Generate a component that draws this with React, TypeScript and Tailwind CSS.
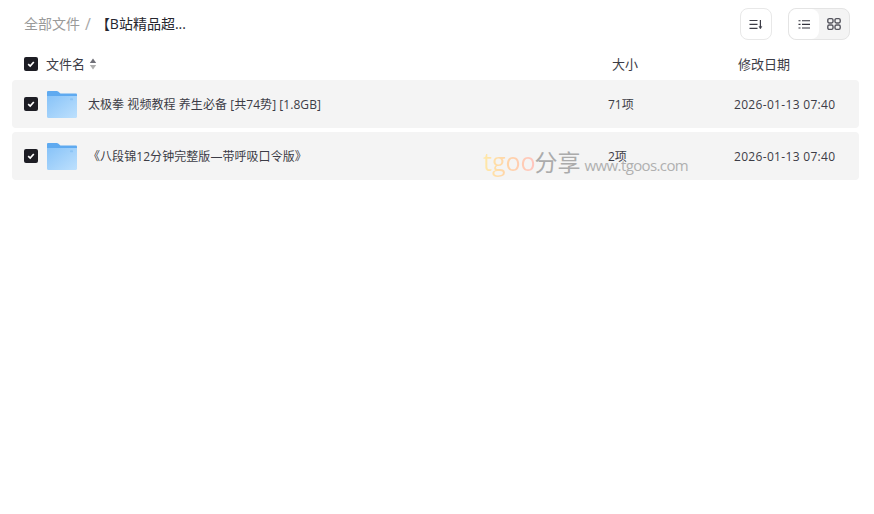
import React from 'react';

const files = [
    { name: '太极拳 视频教程 养生必备 [共74势] [1.8GB]', count: '71项', date: '2026-01-13 07:40' },
    { name: '《八段锦12分钟完整版—带呼吸口令版》', count: '2项', date: '2026-01-13 07:40' },
];

const Check = () => (
    <span className="flex h-[14px] w-[14px] shrink-0 items-center justify-center rounded-[2px] bg-[#1d1d24]">
        <svg width="10" height="10" viewBox="0 0 10 10" fill="none">
            <path d="M2.2 5.2 4.2 7.1 7.8 3" stroke="#fff" strokeWidth="1.7" />
        </svg>
    </span>
);

const Folder = ({ id }: { id: string }) => (
    <svg width="30" height="27" viewBox="0 0 30 28" preserveAspectRatio="none" className="block shrink-0">
        <defs>
            <linearGradient id={id} x1="0" y1="0" x2="1" y2="1">
                <stop offset="0" stopColor="#88c3f8" />
                <stop offset="1" stopColor="#bde0fd" />
            </linearGradient>
        </defs>
        <path d="M0 1.2C0 .5.5 0 1.2 0h8.6c.6 0 1 .2 1.4.6L13.4 2.6H28.8c.7 0 1.2.5 1.2 1.2V8H0Z" fill="#5faaf0" />
        <path d="M0 5.2h30v21.6c0 .7-.5 1.2-1.2 1.2H1.2C.5 28 0 27.5 0 26.8Z" fill={`url(#${id})`} />
        <rect x="23" y="7.5" width="3" height="2" rx=".5" fill="#8cc4f5" />
    </svg>
);

const Watermark = () => (
    <div className="pointer-events-none absolute left-[483px] top-[145px] flex items-baseline whitespace-nowrap font-['Open_Sans','Noto_Sans_CJK_SC',sans-serif] leading-[32px]">
        <span className="bg-gradient-to-r from-[#ffe9a8] via-[#ffd2a8] to-[#ffc4c0] bg-clip-text text-[25px] text-transparent">tgoo</span>
        <span className="-ml-px text-[23px] text-[#ababab]">分享</span>
        <span className="ml-1 text-[15px] tracking-[-0.62px] text-[#b0b0b0]">www.tgoos.com</span>
    </div>
);

export default function App() {
    return (
        <div className="relative min-h-[514px] bg-white pl-3 pr-[15px] font-['Open_Sans','Noto_Sans_CJK_SC',sans-serif] text-[#3c3c46]">
            <div className="flex h-12 items-center pl-3 pr-[9px]">
                <span className="text-sm leading-5 text-[#9a9a9a]">全部文件</span>
                <span className="ml-[5px] text-base leading-5 text-[#a8a8a8]">/</span>
                <span className="ml-[5px] text-sm leading-5 text-[#26262e]">【B站精品超...</span>
                <button className="ml-auto flex h-8 w-8 items-center justify-center rounded-lg border border-[#e8e8e8] bg-white">
                    <svg width="16" height="16" viewBox="0 0 16 16" fill="none" stroke="#3c3c46" strokeWidth="1.2">
                        <path d="M1.5 4.5h8M1.5 8.4h8M1.5 12.3h8" />
                        <path d="M12.4 4v7.5" />
                        <path d="M10.9 10.4 12.4 13 13.9 10.4Z" fill="#3c3c46" strokeWidth=".4" />
                    </svg>
                </button>
                <div className="ml-4 flex h-8 w-[62px] rounded-lg border border-[#e4e4e4] bg-[#f4f4f4]">
                    <button className="flex h-full w-[30px] items-center justify-center rounded-lg bg-white">
                        <svg width="14" height="14" viewBox="0 0 14 14" fill="none" stroke="#33333c" strokeWidth="1.1">
                            <path d="M5 3.8h8M5 7.4h8M5 11h8" />
                            <path d="M1.5 3.8h2M1.5 7.4h2M1.5 11h2" />
                        </svg>
                    </button>
                    <button className="flex h-full flex-1 items-center justify-center">
                        <svg width="14" height="14" viewBox="0 0 14 14" fill="none" stroke="#55555e" strokeWidth="1.4">
                            <rect x=".8" y="1.6" width="5.2" height="4.4" rx="1.4" />
                            <rect x="8" y="1.6" width="5.2" height="4.4" rx="1.4" />
                            <rect x=".8" y="8" width="5.2" height="4.4" rx="1.4" />
                            <rect x="8" y="8" width="5.2" height="4.4" rx="1.4" />
                        </svg>
                    </button>
                </div>
            </div>

            <div className="flex h-8 items-center pb-px pl-3 text-[13px] leading-5">
                <Check />
                <span className="ml-2">文件名</span>
                <svg width="8" height="12" viewBox="0 0 8 12" className="ml-[4px]">
                    <path d="M4 .6 7.2 5H.8Z" fill="#6f6f77" />
                    <path d="M4 11.4 7.2 7H.8Z" fill="#aeaeae" />
                </svg>
                <span className="ml-[515px] w-[126px]">大小</span>
                <span>修改日期</span>
            </div>

            <div className="flex flex-col gap-1">
                {files.map((file, i) => (
                    <div key={i} className="flex h-12 items-center rounded-[4px] bg-[#f4f4f4] pl-3 text-xs leading-4">
                        <Check />
                        <span className="ml-[9px]"><Folder id={`folder-${i}`} /></span>
                        <span className="ml-[11px] w-[520px] truncate pt-px tracking-[0.06px]">{file.name}</span>
                        <span className="w-[126px] pt-px">{file.count}</span>
                        <span className="pt-px tracking-[0.32px]">{file.date}</span>
                    </div>
                ))}
            </div>

            <Watermark />
        </div>
    );
}
